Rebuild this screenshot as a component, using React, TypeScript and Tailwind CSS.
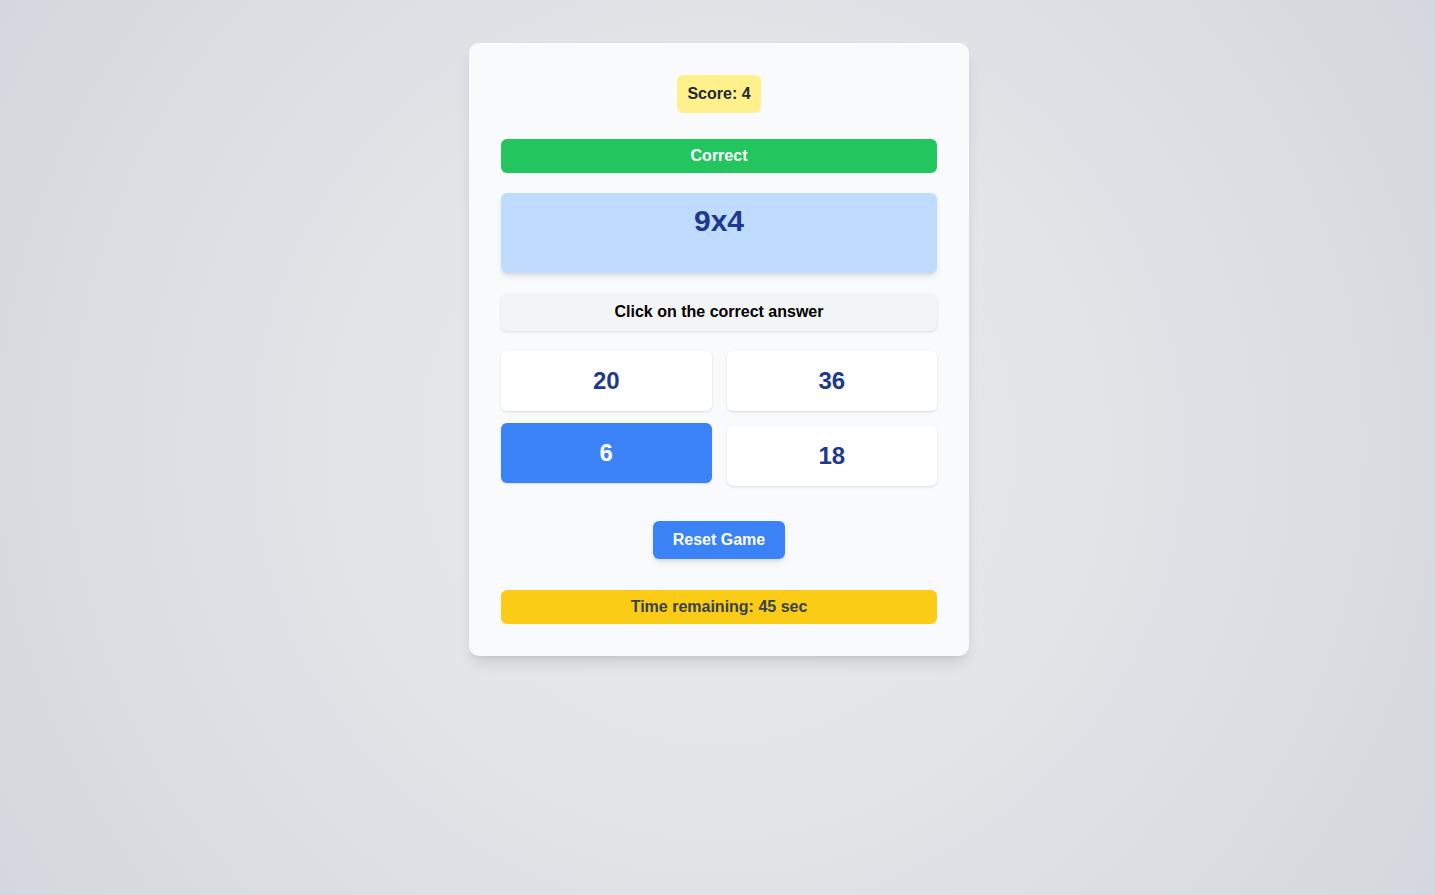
export default function App() {
  return (
    <div
      className="min-h-screen w-full flex justify-center items-start pt-[43px] pl-[3px]"
      style={{
        fontFamily: '"Liberation Sans", Arial, sans-serif',
        background: "radial-gradient(circle at center, #e7e9ec 0%, #e3e5e9 40%, #d4d7dd 100%)",
      }}
    >
      <div className="w-[500px] bg-[#f9fafb] rounded-[10px] shadow-lg p-8 flex flex-col">
        <div className="flex justify-center">
          <div className="bg-[#fef08a] text-[#1f2937] font-bold text-base leading-6 px-[10px] py-[7px] rounded-md">
            Score: 4
          </div>
        </div>
        <div className="mt-[26px] bg-[#22c55e] text-white font-bold text-base leading-6 py-[5px] text-center rounded-md">
          Correct
        </div>
        <div className="mt-5 h-20 bg-[#bfdbfe] text-[#1e3a8a] font-bold text-[30px] leading-9 pt-[10px] text-center rounded-md shadow-md">
          9x4
        </div>
        <div className="mt-[21px] h-[37px] pb-[2px] flex items-center justify-center bg-[#f3f4f6] text-black font-bold text-base leading-6 rounded-md shadow-sm">
          Click on the correct answer
        </div>
        <div className="mt-5 grid grid-cols-2 gap-x-[15px] gap-y-3 items-start">
          <button className="h-[60px] bg-white text-[#1e3a8a] font-bold text-2xl rounded-md shadow-sm">20</button>
          <button className="h-[60px] bg-white text-[#1e3a8a] font-bold text-2xl rounded-md shadow-sm">36</button>
          <button className="h-[60px] bg-[#3b82f6] text-white font-bold text-2xl rounded-md shadow-sm">6</button>
          <button className="h-[60px] mt-[3px] bg-white text-[#1e3a8a] font-bold text-2xl rounded-md shadow-sm">18</button>
        </div>
        <div className="mt-[35px] flex justify-center">
          <button className="bg-[#3b82f6] text-white font-bold text-base leading-6 px-5 py-[7px] rounded-md shadow-md">
            Reset Game
          </button>
        </div>
        <div className="mt-[31px] bg-[#facc15] text-[#374151] font-bold text-base leading-6 py-[5px] text-center rounded-md">
          Time remaining: 45 sec
        </div>
      </div>
    </div>
  );
}
